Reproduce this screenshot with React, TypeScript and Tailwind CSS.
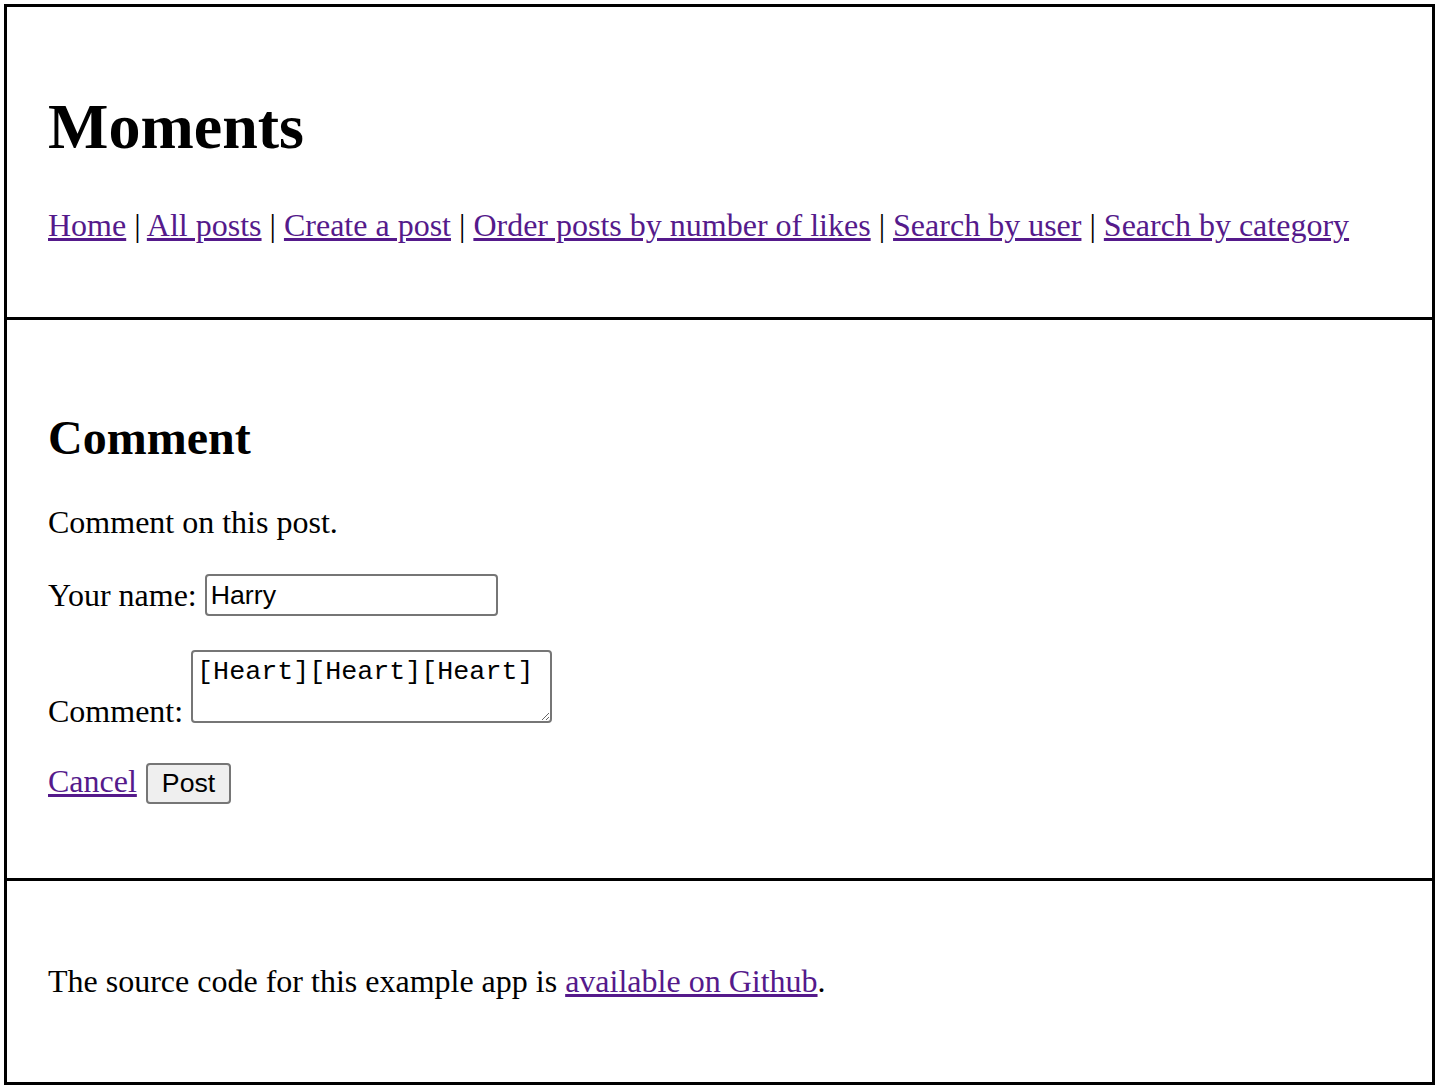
const serif = "font-['Liberation_Serif','Times_New_Roman',serif]";
const linkCls = "text-[#551a8b] underline";

const navLinks = [
  "Home",
  "All posts",
  "Create a post",
  "Order posts by number of likes",
  "Search by user",
  "Search by category",
];

function Header() {
  return (
    <div className="border-3 border-black px-[41px] pt-[83px] pb-[73px]">
      <h1 className="text-[64px] leading-[74px] font-bold">Moments</h1>
      <nav className="mt-[43px] text-[32px] leading-[37px]">
        {navLinks.map((label, i) => (
          <span key={label}>
            {i > 0 && " | "}
            <a href="#" className={linkCls}>
              {label}
            </a>
          </span>
        ))}
      </nav>
    </div>
  );
}

function CommentForm() {
  return (
    <div className="border-3 border-t-0 border-black px-[41px] pt-[90px] pb-[74px]">
      <h2 className="text-[48px] leading-[55px] font-bold">Comment</h2>
      <p className="mt-[39px] text-[32px] leading-[37px]">Comment on this post.</p>
      <form onSubmit={(e) => e.preventDefault()}>
        <div className="mt-[33px] flex items-center gap-[8px] h-[42px]">
          <label htmlFor="name" className="text-[32px] leading-[37px]">
            Your name:
          </label>
          <input
            id="name"
            type="text"
            defaultValue="Harry"
            className="w-[293px] h-[42px] border-2 border-[#767676] rounded-[4px] px-[4px] text-[26.7px] text-black font-['Liberation_Sans',Arial,sans-serif] outline-none"
          />
        </div>
        <div className="mt-[34px] flex items-end gap-[8px]">
          <label htmlFor="comment" className="text-[32px] leading-[37px] mb-[-7px]">
            Comment:
          </label>
          <textarea
            id="comment"
            defaultValue="[Heart][Heart][Heart]"
            className="w-[361px] h-[73px] border-2 border-[#767676] rounded-[4px] px-[4px] pt-[5px] pb-[2px] text-[26.7px] leading-[31px] font-['Liberation_Mono','Courier_New',monospace] outline-none"
          />
        </div>
        <div className="mt-[40px] flex items-baseline gap-[9px]">
          <a href="#" className={`${linkCls} text-[32px] leading-[37px]`}>
            Cancel
          </a>
          <button
            type="submit"
            className="h-[41px] px-[14px] bg-[#efefef] border-2 border-[#767676] rounded-[4px] text-[26.7px] leading-[33px] text-black font-['Liberation_Sans',Arial,sans-serif]"
          >
            Post
          </button>
        </div>
      </form>
    </div>
  );
}

function Footer() {
  return (
    <div className="border-3 border-t-0 border-black px-[41px] pt-[82px] pb-[82px]">
      <p className="text-[32px] leading-[37px]">
        The source code for this example app is{" "}
        <a href="#" className={linkCls}>
          available on Github
        </a>
        .
      </p>
    </div>
  );
}

export default function App() {
  return (
    <div className={`${serif} bg-white text-black min-h-[1090px] pt-[4px] pl-[4px] pr-[5px]`}>
      <Header />
      <CommentForm />
      <Footer />
    </div>
  );
}
